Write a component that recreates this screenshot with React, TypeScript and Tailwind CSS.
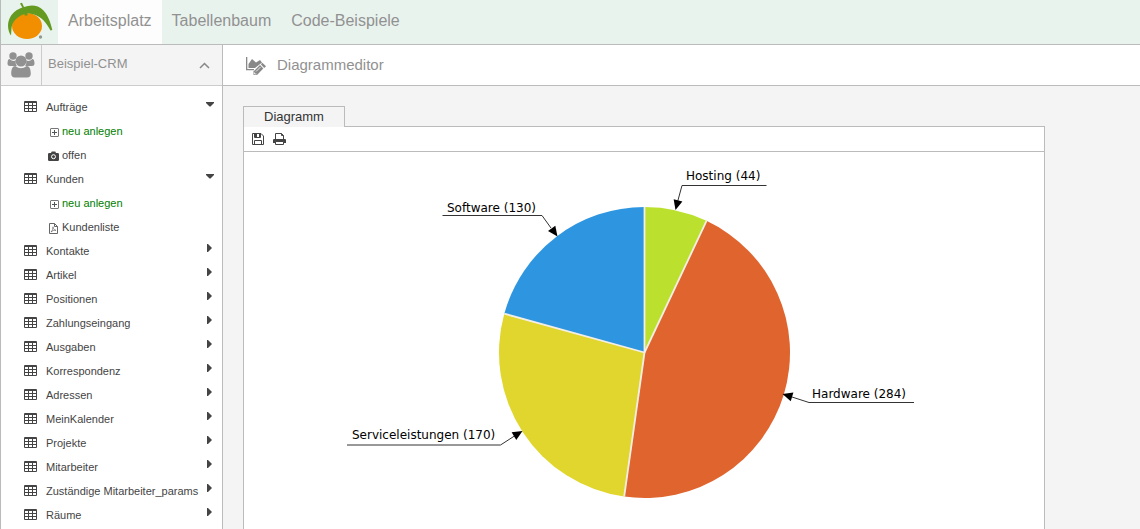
import React from "react";

type IconKind = "plus" | "camera" | "pdf";

interface Child {
  label: string;
  icon: IconKind;
  create?: boolean;
}

interface Entry {
  label: string;
  children?: Child[];
}

const entries: Entry[] = [
  {
    label: "Aufträge",
    children: [
      { label: "neu anlegen", icon: "plus", create: true },
      { label: "offen", icon: "camera" },
    ],
  },
  {
    label: "Kunden",
    children: [
      { label: "neu anlegen", icon: "plus", create: true },
      { label: "Kundenliste", icon: "pdf" },
    ],
  },
  { label: "Kontakte" },
  { label: "Artikel" },
  { label: "Positionen" },
  { label: "Zahlungseingang" },
  { label: "Ausgaben" },
  { label: "Korrespondenz" },
  { label: "Adressen" },
  { label: "MeinKalender" },
  { label: "Projekte" },
  { label: "Mitarbeiter" },
  { label: "Zuständige Mitarbeiter_params" },
  { label: "Räume" },
];

function Logo() {
  return (
    <svg width="46" height="40" viewBox="0 0 46 40" aria-hidden="true">
      <ellipse cx="19" cy="24" rx="15" ry="13" fill="#f28f00" />
      <path
        d="M12 1.500L14 .8L16 5C23 2.500 30 3 35 8C40 13 42.500 20 44.300 28L42.500 28.500C38 20 33 14.500 26 12.500L19.500 11V13.500H16.500V12C9 14.500 3.800 20 3.500 27L3 33.500C-.5 29 -1 21 2 15.500C5 10 9 7.500 14.300 5.500Z"
        fill="#659a20"
      />
      <circle cx="32.500" cy="35" r="1.700" fill="#8f9b8f" />
    </svg>
  );
}

function UsersIcon() {
  return (
    <svg width="28" height="26" viewBox="0 0 28 26" fill="#919191" aria-hidden="true">
      <circle cx="6" cy="4" r="3.700" />
      <circle cx="22" cy="4" r="3.700" />
      <path d="M.5 12C.5 8.500 1.300 7 2.500 7Q6 10 9 8.200C8.300 10.500 8.800 12 9.800 14H3Q.5 14 .5 12Z" />
      <path d="M27.500 12C27.500 8.500 26.700 7 25.500 7Q22 10 19 8.200C19.700 10.500 19.200 12 18.200 14H25Q27.500 14 27.500 12Z" />
      <circle cx="14" cy="9" r="5.500" />
      <path d="M8.300 14Q14 18.500 19.700 14C22.500 14 23.800 17.500 23.800 21.500Q23.800 25.500 20 25.500H8Q4.200 25.500 4.200 21.500C4.200 17.500 5.500 14 8.300 14Z" />
    </svg>
  );
}

function ChartEditIcon() {
  return (
    <svg width="21" height="19" viewBox="0 0 21 19" fill="#888" aria-hidden="true">
      <path d="M0 0H1.300V12H8V13.300H0Z" />
      <path d="M2.500 11V7L6 2L10 5.500L14 3L16 5.500L9 11Z" />
      <path d="M7.500 18V14.500L14 8L17.300 11.500L11 18Z" />
      <path d="M14.800 7.200L16.300 5.700L20 9.200L18.200 10.900Z" />
      <path d="M10 14.500L14.500 10" stroke="#fff" strokeWidth=".8" />
      <path d="M8.500 15.500V17H10.500" stroke="#fff" strokeWidth=".8" fill="none" />
    </svg>
  );
}

function TableIcon() {
  return (
    <svg width="13" height="11" viewBox="0 0 13 11" aria-hidden="true">
      <rect width="13" height="11" rx="1" fill="#444" />
      {[1, 5, 9].map((x) =>
        [2, 5, 8].map((y) => (
          <rect key={`${x}-${y}`} x={x} y={y} width="3" height="2" fill="#fff" />
        )),
      )}
    </svg>
  );
}

function ChildIcon({ kind }: { kind: IconKind }) {
  if (kind === "plus") {
    return (
      <svg width="11" height="9" viewBox="-2 0 11 9" fill="none" aria-hidden="true">
        <rect x=".5" y=".5" width="8" height="8" rx=".5" stroke="#777" />
        <path d="M2 4.500H7M4.500 2V7" stroke="#555" />
      </svg>
    );
  }
  if (kind === "camera") {
    return (
      <svg width="11" height="10" viewBox="0 0 11 10" aria-hidden="true">
        <path
          d="M1.300 2H3L3.700 .5H7.300L8 2H9.700Q11 2 11 3.300V8.700Q11 10 9.700 10H1.300Q0 10 0 8.700V3.300Q0 2 1.300 2Z"
          fill="#444"
        />
        <circle cx="5.500" cy="5.700" r="2" fill="none" stroke="#fff" />
      </svg>
    );
  }
  return (
    <svg width="9" height="11" viewBox="0 0 9 11" fill="none" stroke="#666" aria-hidden="true">
      <path d="M.5 .5H5.500L8.500 3.500V10.500H.5Z" />
      <path d="M5.500 .5V3.500H8.500" />
      <path d="M2 9C3.500 7.500 4 5.500 4 3.800C4 6 5.500 7.300 7 7.300C5 7 3.500 7.700 2 9Z" strokeWidth=".7" />
    </svg>
  );
}

function SaveIcon() {
  return (
    <svg width="12" height="12" viewBox="0 0 12 12" fill="none" stroke="#444" aria-hidden="true">
      <path d="M.5 .5H9L11.500 3V11.500H.5Z" />
      <path d="M2.500 .5V4.500H8.500V.5M2.500 11.500V7.500H9.500V11.500" />
      <path d="M3 1H5V4H3ZM7 1H8V4H7Z" fill="#444" stroke="none" />
    </svg>
  );
}

function PrintIcon() {
  return (
    <svg width="13" height="12" viewBox="0 0 13 12" aria-hidden="true">
      <path d="M2.500 7V.5H8.500L10.500 2.500V7" fill="#fff" stroke="#444" />
      <path d="M8.500 .5V2.500H10.500" fill="none" stroke="#444" />
      <path d="M1 6H12Q13 6 13 7V10H0V7Q0 6 1 6Z" fill="#444" />
      <path d="M2.500 8.500H10.500V11.500H2.500Z" fill="#fff" stroke="#444" />
    </svg>
  );
}

function ChevronIcon() {
  return (
    <svg width="11" height="7" viewBox="0 0 11 7" fill="none" stroke="#888" strokeWidth="1.500" aria-hidden="true">
      <path d="M1 6L5.500 1.500L10 6" />
    </svg>
  );
}

function Arrow({ open }: { open: boolean }) {
  return (
    <svg width="8" height="8" viewBox="0 0 8 8" fill="#444" aria-hidden="true">
      {open ? <path d="M0 2H8V3L4.500 6.500H3.500L0 3Z" /> : <path d="M1 0H2L5.500 3.500V4.500L2 8H1Z" />}
    </svg>
  );
}

const cx = 400.5;
const cy = 200.5;
const radius = 145.5;

const slices = [
  { name: "Hosting", value: 44, color: "#bbe02e", textX: 442, textY: 28, line: "M522.500 33.500H438L433.500 50", tip: [431.5, 58], tail: [438, 33] },
  { name: "Hardware", value: 284, color: "#e0642e", textX: 568, textY: 246, line: "M670 250.500H565L548 245", tip: [538.5, 242], tail: [565, 250] },
  { name: "Serviceleistungen", value: 170, color: "#e0d62e", textX: 108, textY: 287, line: "M103 293H256.500L272 283", tip: [278.5, 279], tail: [257, 292] },
  { name: "Software", value: 130, color: "#2e96e0", textX: 203, textY: 60, line: "M198.500 63.500H298L307 76", tip: [313.5, 84.5], tail: [298, 63] },
];

const total = slices.reduce((sum, slice) => sum + slice.value, 0);

function pointAt(share: number) {
  const angle = share * 2 * Math.PI;
  return `${cx + radius * Math.sin(angle)} ${cy - radius * Math.cos(angle)}`;
}

function arrowHead(tip: number[], tail: number[]) {
  const length = Math.hypot(tail[0] - tip[0], tail[1] - tip[1]);
  const ux = (tail[0] - tip[0]) / length;
  const uy = (tail[1] - tip[1]) / length;
  const bx = tip[0] + ux * 10;
  const by = tip[1] + uy * 10;
  return `${tip[0]},${tip[1]} ${bx - uy * 4.5},${by + ux * 4.5} ${bx + uy * 4.5},${by - ux * 4.5}`;
}

function PieChart() {
  let sum = 0;
  return (
    <svg viewBox="0 0 800 377" className="block h-auto w-full" role="img" aria-label="Diagramm">
      {slices.map((slice) => {
        const from = sum / total;
        sum += slice.value;
        const to = sum / total;
        const large = to - from > 0.5 ? 1 : 0;
        return (
          <path
            key={slice.name}
            d={`M${cx} ${cy}L${pointAt(from)}A${radius} ${radius} 0 ${large} 1 ${pointAt(to)}Z`}
            fill={slice.color}
          />
        );
      })}
      {slices.map((slice) => {
        sum += slice.value;
        return (
          <path key={slice.name} d={`M${cx} ${cy}L${pointAt(sum / total)}`} stroke="#f4efe6" strokeWidth="1.800" />
        );
      })}
      {slices.map((slice) => (
        <g key={slice.name}>
          <path d={slice.line} fill="none" stroke="#333" />
          <polygon points={arrowHead(slice.tip, slice.tail)} fill="#000" />
          <text x={slice.textX} y={slice.textY} className="font-['DejaVu_Sans',sans-serif] text-[12px]" fill="#000">
            {`${slice.name} (${slice.value})`}
          </text>
        </g>
      ))}
    </svg>
  );
}

function Sidebar() {
  return (
    <aside className="w-[222px] shrink-0 border-r border-[#bbb] bg-white">
      <div className="flex h-[41px] border-b border-[#ccc] bg-[#f4f4f4]">
        <div className="flex w-[41px] items-center justify-center border-r border-[#ccc]">
          <UsersIcon />
        </div>
        <button type="button" className="flex flex-1 items-center justify-between pr-3 pl-[6px] text-[13px] text-[#919191]">
          <span className="pb-[2px]">Beispiel-CRM</span>
          <ChevronIcon />
        </button>
      </div>
      <ul className="pt-[9px] text-[11px] leading-6 text-[#444]">
        {entries.map((entry) => (
          <li key={entry.label}>
            <button type="button" className="flex h-6 w-full items-center pr-2 pl-[23px] text-left">
              <span className="pb-[2px]">
                <TableIcon />
              </span>
              <span className="ml-[9px] flex-1 whitespace-nowrap">{entry.label}</span>
              <span className="pb-[6px]">
                <Arrow open={Boolean(entry.children)} />
              </span>
            </button>
            {entry.children && (
              <ul>
                {entry.children.map((child) => (
                  <li key={child.label}>
                    <a href="#" className="flex h-6 items-center gap-[3px] pl-[47px]">
                      <span className="flex w-[11px] justify-center pt-[2px]">
                        <ChildIcon kind={child.icon} />
                      </span>
                      <span className={child.create ? "text-[#008000]" : "text-[#444]"}>{child.label}</span>
                    </a>
                  </li>
                ))}
              </ul>
            )}
          </li>
        ))}
      </ul>
    </aside>
  );
}

export default function App() {
  return (
    <div className="flex min-h-screen flex-col border-l border-[#bbb] bg-[#f4f4f4] font-['Liberation_Sans',Arial,sans-serif]">
      <header className="flex h-[45px] border-b border-[#bbb] bg-[#e9f3ee]">
        <a href="#" aria-label="Start" className="flex w-[57px] items-start pt-[2px] pl-[7px]">
          <Logo />
        </a>
        <nav className="flex text-[16px] text-[#919191]">
          <a href="#" className="flex items-center bg-[#fdfdfd] px-[10px] pb-[2px]">Arbeitsplatz</a>
          <a href="#" className="flex items-center px-[10px] pb-[2px]">Tabellenbaum</a>
          <a href="#" className="flex items-center px-[10px] pb-[2px]">Code-Beispiele</a>
        </nav>
      </header>
      <div className="flex flex-1">
        <Sidebar />
        <main className="flex min-w-0 flex-1 flex-col">
          <div className="flex h-[41px] items-center gap-[10px] border-b border-[#bbb] bg-white pl-[23px]">
            <span className="pt-[2px]">
              <ChartEditIcon />
            </span>
            <h1 className="text-[15px] text-[#919191]">Diagrammeditor</h1>
          </div>
          <div className="flex flex-1 flex-col pt-5 pl-5">
            <div className="flex w-full max-w-[802px]">
              <button
                type="button"
                className="h-[21px] border border-b-0 border-[#bbb] px-5 text-[13px] leading-5 text-[#333]"
              >
                Diagramm
              </button>
              <div className="flex-1 border-b border-[#bbb]" />
            </div>
            <section className="w-full max-w-[802px] flex-1 border-x border-[#bbb] bg-white">
              <div className="flex h-[25px] items-center gap-[9px] border-b border-[#bbb] pl-2">
                <button type="button" aria-label="Speichern">
                  <SaveIcon />
                </button>
                <button type="button" aria-label="Drucken">
                  <PrintIcon />
                </button>
              </div>
              <PieChart />
            </section>
          </div>
        </main>
      </div>
    </div>
  );
}
